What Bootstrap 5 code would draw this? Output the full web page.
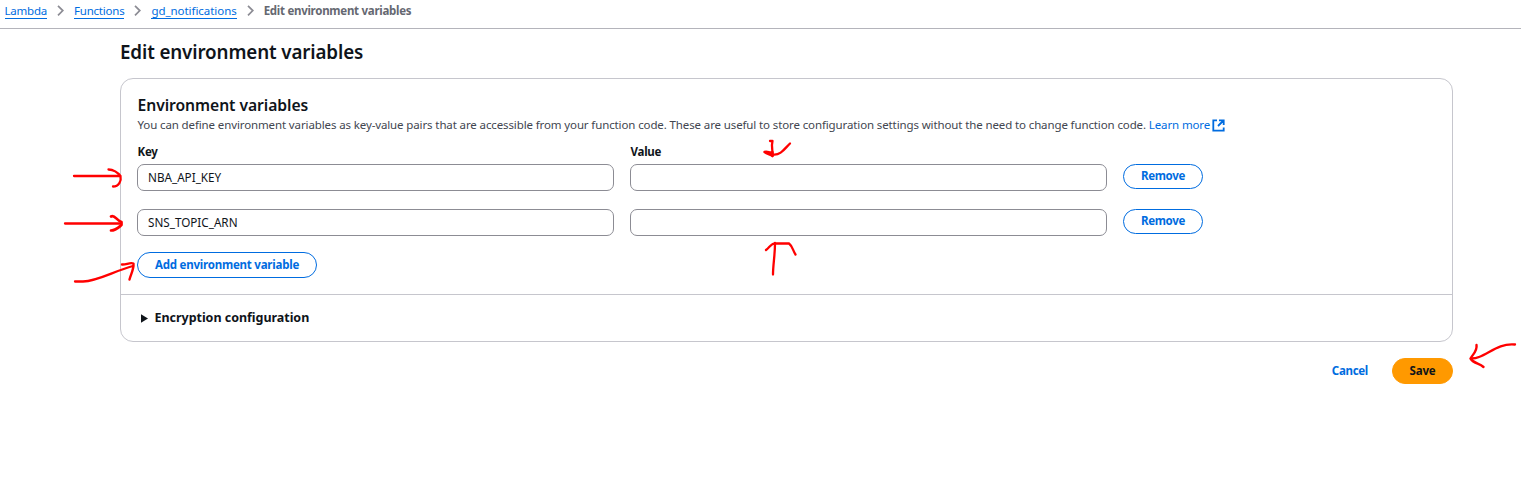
<!DOCTYPE html>
<html lang="en">
<head>
<meta charset="utf-8">
<meta name="viewport" content="width=device-width, initial-scale=1">
<title>Edit environment variables</title>
<link href="https://cdn.jsdelivr.net/npm/bootstrap@5.3.0/dist/css/bootstrap.min.css" rel="stylesheet">
<style>
  body { font-family: "Noto Sans", "Open Sans", sans-serif; font-size: 11.5px; line-height: 18px; letter-spacing: -.12px; color: #0f141a; height: 485px; overflow: hidden; }
  a { color: #006ce0; text-decoration: none; }
  .crumbs { height: 29px; padding: 3px 0 0 4.5px; border-bottom: 1px solid #b4b4bb; }
  .crumbs a { border-bottom: 1px solid #006ce0; line-height: 15px; letter-spacing: -.22px; }
  .crumbs a.fn-name { letter-spacing: -.05px; }
  .crumbs .current { color: #656871; font-weight: 700; line-height: 15px; letter-spacing: -.28px; }
  .crumbs svg { margin: 2px 8px 0; flex: none; }
  .page { width: 1333px; margin-left: 120px; }
  .page-title { font-size: 18.8px; line-height: 24px; font-weight: 600; letter-spacing: -.13px; margin: 11px 0 14px; }
  .env-card { height: 264px; border: 1px solid #c6c6cd; border-radius: 13px; }
  .env-body { height: 216px; padding: 16px 16px 0; border-bottom: 1px solid #c6c6cd; }
  .env-title { font-size: 15.7px; line-height: 20px; font-weight: 600; letter-spacing: -.06px; margin: 0 0 0 .5px; }
  .desc { color: #424650; margin: 1px 0 9px .5px; white-space: nowrap; }
  .desc svg { margin-left: -1px; }
  .env-grid { display: grid; grid-template-columns: 477px 477px 80px; column-gap: 16px; align-items: start; }
  .env-grid label { font-weight: 700; line-height: 18px; letter-spacing: -.25px; margin: 0 0 3px .5px; }
  .env-grid .form-control { height: 27px; min-height: 0; padding: 0 10px 2px; font-size: 11.7px; letter-spacing: 0; border-color: #8c8c94; border-radius: 7px; color: #0f141a; margin-bottom: 18px; }
  .pill { font-size: 11.5px; font-weight: 700; line-height: 1; letter-spacing: -.22px; padding: 0; border-radius: 20px; height: 26px; --bs-btn-color: #006ce0; --bs-btn-border-color: #006ce0; }
  .pill-remove { height: 25px; width: 80px; padding-bottom: 1px; letter-spacing: -.35px; }
  .pill-add { width: 180px; margin-top: -2px; }
  .pill-save { width: 61px; --bs-btn-bg: #ff9900; --bs-btn-color: #0f141a; --bs-btn-border-color: #ff9900; }
  .cancel-link { font-weight: 700; letter-spacing: -.3px; }
  .encryption { height: 46px; padding-left: 19.5px; font-size: 12.5px; font-weight: 700; letter-spacing: -.03px; }
  .encryption svg { margin-right: 7px; }
  .ink { left: 0; top: 0; pointer-events: none; }
</style>
<script src="https://cdn.jsdelivr.net/npm/bootstrap@5.3.0/dist/js/bootstrap.bundle.min.js"></script>
</head>
<body class="bg-white position-relative">
<nav class="crumbs d-flex align-items-start" aria-label="Breadcrumb">
  <a href="#">Lambda</a>
  <svg width="11" height="13" viewBox="0 0 11 13" fill="none" stroke="#8c8c94" stroke-width="1.7"><path d="M3 .8 7.8 5.6 3 10.4"/></svg>
  <a href="#">Functions</a>
  <svg width="11" height="13" viewBox="0 0 11 13" fill="none" stroke="#8c8c94" stroke-width="1.7"><path d="M3 .8 7.8 5.6 3 10.4"/></svg>
  <a href="#" class="fn-name">gd_notifications</a>
  <svg width="11" height="13" viewBox="0 0 11 13" fill="none" stroke="#8c8c94" stroke-width="1.7"><path d="M3 .8 7.8 5.6 3 10.4"/></svg>
  <span class="current">Edit environment variables</span>
</nav>

<main class="page">
  <h1 class="page-title">Edit environment variables</h1>
  <section class="env-card">
    <div class="env-body">
      <h2 class="env-title">Environment variables</h2>
      <p class="desc">You can define environment variables as key-value pairs that are accessible from your function code. These are useful to store configuration settings without the need to change function code. <a href="#">Learn more <svg width="13" height="13" viewBox="0 0 13 13" fill="none" stroke="currentColor" stroke-width="1.8"><path d="M5 1.3H1.3v10.4h10.4V8.5M7 1.3h4.7v4.7M11.5 1.5 6 7"/></svg></a></p>
      <div class="env-grid">
        <label for="key1">Key</label><label for="val1">Value</label><span></span>
        <input class="form-control" id="key1" value="NBA_API_KEY"><input class="form-control" id="val1"><button class="btn btn-outline-primary pill pill-remove">Remove</button>
        <input class="form-control" value="SNS_TOPIC_ARN" aria-label="Key"><input class="form-control" aria-label="Value"><button class="btn btn-outline-primary pill pill-remove">Remove</button>
      </div>
      <button class="btn btn-outline-primary pill pill-add d-block">Add environment variable</button>
    </div>
    <div class="encryption d-flex align-items-center">
      <svg width="7" height="9" viewBox="0 0 7 9"><path d="M0 .3 7 4.5 0 8.7Z" fill="#0f141a"/></svg>Encryption configuration
    </div>
  </section>
  <div class="d-flex justify-content-end align-items-center gap-4 mt-3">
    <a class="cancel-link" href="#">Cancel</a>
    <button class="btn pill pill-save">Save</button>
  </div>
</main>

<!-- hand-drawn pointer arrows laid over the form -->
<svg class="ink position-absolute" width="1521" height="485" viewBox="0 0 1521 485" fill="none" stroke="#ff0000" stroke-width="2.3" stroke-linecap="round" stroke-linejoin="round">
  <path d="M74 176H119M108.500 169.500C113 169.500 118 172.500 120.500 176C121.500 181 119 186.500 113 186.500"/>
  <path d="M65 223.500H121"/>
  <path stroke-width="2.700" d="M111 216.500C115 214.500 116 220 121.500 222V225C119 227 116 230.500 111 230.500"/>
  <path d="M75 281.500H83C98 281 114 271 133 266"/>
  <path stroke-width="2.400" d="M122 264.500C126 265 130 262 133.500 263.500C134 269 131 274 129.500 279.500"/>
  <path d="M770 141H772.500C771 146 773 151 772.500 156M773 154.500C781 155.500 785 148 790 143.500"/>
  <path stroke-width="2.400" d="M764.500 152C768 151 770 153.500 772.500 152V156C770 154.500 767 154 764.500 152"/>
  <path d="M773 274.500C773 265 775 255 775 243M766 250C770 247 772 242 776 243.500H789C792.500 246 793 251 795.500 254.500"/>
  <path d="M1515 344.500C1499 343 1490 353 1479 357C1476 358.500 1474 358.500 1471 358.500"/>
  <path stroke-width="2.400" d="M1476.500 345C1477.500 351 1473 354 1470.500 358.500C1474 364 1479 363 1483.500 367"/>
</svg>
</body>
</html>
